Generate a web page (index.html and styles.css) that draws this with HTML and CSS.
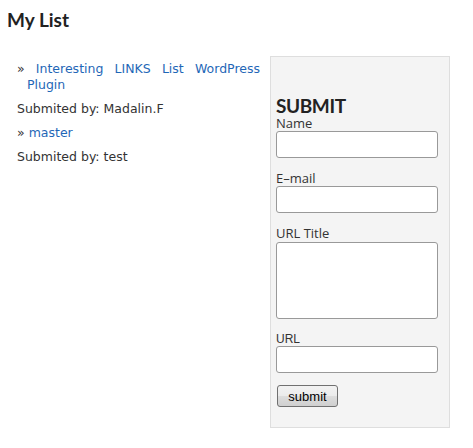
FILE: index.html
```html
<!DOCTYPE html>
<html>
<head>
<meta charset="utf-8">
<link rel="stylesheet" href="styles.css">
</head>
<body>
<h1 class="title">My List</h1>
<div class="row">
  <div class="list">
    <p class="item">» <a href="#">Interesting LINKS List WordPress Plugin</a></p>
    <p class="by">Submited by: Madalin.F</p>
    <p class="item">» <a href="#">master</a></p>
    <p class="by">Submited by: test</p>
  </div>
  <form class="box">
    <h2 class="box-title">SUBMIT</h2>
    <label class="lbl">Name</label>
    <input class="field" type="text">
    <label class="lbl">E–mail</label>
    <input class="field" type="text">
    <label class="lbl">URL Title</label>
    <textarea class="field area"></textarea>
    <label class="lbl lbl-arial">URL</label>
    <input class="field last" type="text">
    <button class="btn" type="button">submit</button>
  </form>
</div>
</body>
</html>
```
FILE: styles.css
```css
html, body {
  margin: 0;
  padding: 0;
  background: #fff;
}
body {
  width: 473px;
  height: 448px;
  overflow: hidden;
}
.title {
  margin: 8px 0 0 7px;
  font-family: "Lato", sans-serif;
  font-weight: bold;
  font-size: 19px;
  line-height: 24px;
  color: #222;
}
.row {
  display: flex;
  align-items: flex-start;
  margin-top: 24px;
  gap: 10px;
}
.list {
  width: 243px;
  margin-left: 17px;
  padding-top: 5px;
  font-family: "DejaVu Sans", sans-serif;
  font-size: 12.5px;
  line-height: 16px;
  color: #333;
}
.item {
  margin: 0 0 8px;
  padding-left: 10px;
  text-indent: -10px;
  text-align: justify;
}
.item a {
  color: #1f67b7;
  text-decoration: none;
}
.by {
  margin: 0 0 8px;
}
.box {
  display: flex;
  flex-direction: column;
  align-items: flex-start;
  width: 165px;
  padding: 39px 8px 20px 5px;
  margin: 0;
  background: #f4f4f4;
  border: 1px solid #dedede;
}
.box-title {
  margin: 0;
  font-family: "Lato", sans-serif;
  font-weight: bold;
  font-size: 19px;
  line-height: 20px;
  letter-spacing: -0.4px;
  color: #222;
}
.lbl {
  display: block;
  font-family: "Open Sans", sans-serif;
  font-size: 13px;
  line-height: 15px;
  color: #333;
}
.lbl-arial {
  font-family: "Liberation Sans", Arial, sans-serif;
  font-size: 12px;
  line-height: 14px;
}
.field {
  box-sizing: border-box;
  display: block;
  width: 162px;
  height: 27px;
  margin: 0 0 13px;
  border: 1px solid #999;
  border-radius: 3px;
  background: #fff;
  padding: 2px 4px;
}
.area {
  height: 77px;
  margin-top: 1px;
  resize: none;
}
.last {
  margin-bottom: 12px;
}
.btn {
  box-sizing: border-box;
  width: 61px;
  height: 22px;
  margin: 0 0 0 1px;
  padding: 0;
  font-family: "Liberation Sans", Arial, sans-serif;
  font-size: 13px;
  color: #000;
  border: 1px solid #707070;
  border-radius: 3px;
  background: linear-gradient(#f2f2f2, #ebebeb 50%, #dddddd 51%, #cfcfcf);
}
```
